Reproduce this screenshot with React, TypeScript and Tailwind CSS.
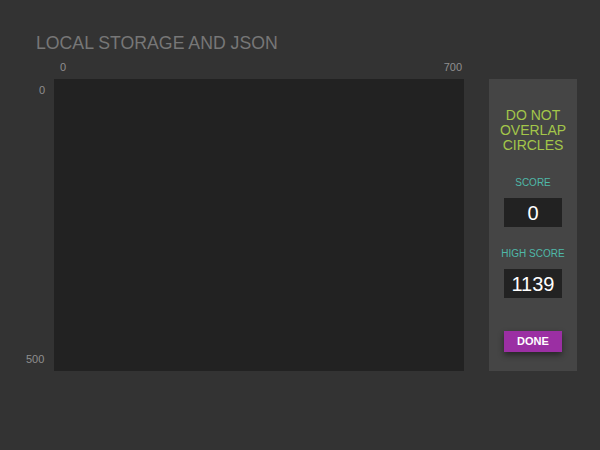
export default function App() {
  return (
    <div className="min-h-[450px] w-[600px] bg-[#333333] pt-[33px] pl-[36px] font-['Liberation_Sans',Arial,sans-serif]">
      <h1 className="text-[17.7px] leading-5 text-[#777777]">LOCAL STORAGE AND JSON</h1>
      <div className="mt-[6px] flex">
        <div className="-ml-[10px] mr-[10px] mt-[20px] flex w-[18px] flex-col justify-between pt-[5px] pb-[6px] text-right text-[11px] leading-3 text-[#8f8f8f]">
          <span className="-mr-[1px]">0</span>
          <span className="mr-[1px]">500</span>
        </div>
        <div className="flex flex-col">
          <div className="flex h-[20px] w-[410px] justify-between pt-[2px] pl-[6px] pr-[2px] text-[11px] leading-3 text-[#8f8f8f]">
            <span>0</span>
            <span>700</span>
          </div>
          <div className="h-[292px] w-[410px] bg-[#222222]" />
        </div>
        <div className="mt-[20px] ml-[25px] flex h-[292px] w-[88px] flex-col items-center bg-[#454545] pt-[29px]">
          <div className="text-center text-[14px] leading-[15px] text-[#a3c64a]">
            DO NOT
            <br />
            OVERLAP
            <br />
            CIRCLES
          </div>
          <div className="mt-[24px] text-[10px] leading-3 text-[#4fb8a8]">SCORE</div>
          <div className="mt-[9px] flex h-[29px] w-[58px] items-center justify-center bg-[#222222] text-[20px] text-white">
            0
          </div>
          <div className="mt-[21px] text-[10px] leading-3 text-[#4fb8a8]">HIGH SCORE</div>
          <div className="mt-[9px] flex h-[29px] w-[58px] items-center justify-center bg-[#222222] text-[20px] text-white">
            1139
          </div>
          <button className="mt-[33px] h-[21px] w-[58px] bg-[#9b2fa3] text-[11px] font-bold text-white shadow-[0_3px_6px_rgba(0,0,0,0.45)]">
            DONE
          </button>
        </div>
      </div>
    </div>
  );
}
